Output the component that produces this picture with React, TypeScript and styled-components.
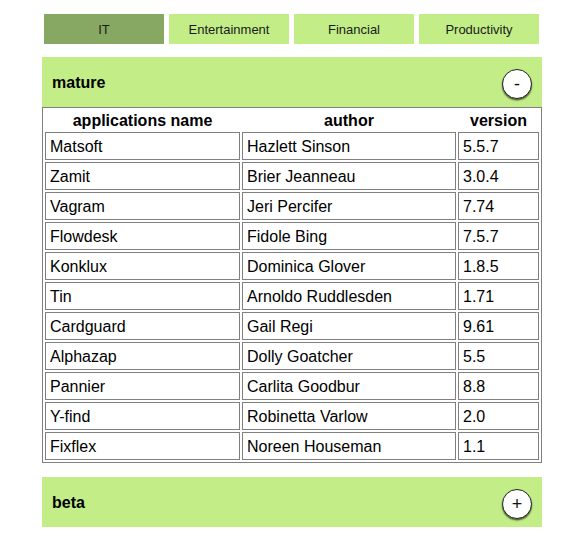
import React, { useState } from "react";
import styled, { createGlobalStyle } from "styled-components";

const Global = createGlobalStyle`
  html, body { margin: 0; padding: 0; background: #ffffff; }
  body { font-family: "Liberation Sans", Arial, Helvetica, sans-serif; color: #000; }
`;

const Page = styled.div`
  width: 500px;
  padding: 14px 0 0 42px;
  display: flex;
  flex-direction: column;
  gap: 13px;
`;

const TabBar = styled.div`
  display: flex;
  gap: 5px;
  padding-left: 2px;
`;

const Tab = styled.button<{ $active?: boolean }>`
  width: 120px;
  height: 30px;
  border: none;
  margin: 0;
  padding: 1px 0 0 0;
  background: ${(p) => (p.$active ? "#87a863" : "#c2ed87")};
  color: #1a1a1a;
  font-family: "Liberation Sans", Arial, sans-serif;
  font-size: 13px;
  cursor: pointer;
`;

const Panels = styled.div`
  display: flex;
  flex-direction: column;
  gap: 14px;
`;

const Section = styled.section`
  display: flex;
  flex-direction: column;
`;

const Header = styled.div`
  height: 50px;
  background: #c2ed87;
  display: flex;
  align-items: center;
  justify-content: space-between;
  padding: 0 10px 0 10px;
  box-sizing: border-box;
`;

const Title = styled.h3`
  margin: 0;
  padding-top: 2px;
  font-size: 16px;
  font-weight: bold;
`;

const Toggle = styled.button`
  width: 30px;
  height: 30px;
  border-radius: 50%;
  border: 1.5px solid #222;
  background: #fff;
  box-shadow: 0 1.5px 1.5px rgba(0, 0, 0, 0.6);
  display: flex;
  align-items: center;
  justify-content: center;
  padding: 0 0 1px 0;
  margin-top: 4px;
  font-family: "Liberation Sans", Arial, sans-serif;
  font-size: 18px;
  line-height: 1;
  color: #111;
  cursor: pointer;
`;

const Table = styled.table`
  width: 500px;
  table-layout: fixed;
  border: 1px solid #808080;
  border-spacing: 2px;
  border-collapse: separate;
  font-size: 16px;
`;

const Th = styled.th`
  padding: 2px 1px 0 1px;
  line-height: 18px;
  font-weight: bold;
  text-align: center;
`;

const Td = styled.td`
  border: 1px solid #808080;
  padding: 5px 4px 3px 4px;
  line-height: 18px;
  text-align: left;
  white-space: nowrap;
  overflow: hidden;
`;

const rows: [string, string, string][] = [
  ["Matsoft", "Hazlett Sinson", "5.5.7"],
  ["Zamit", "Brier Jeanneau", "3.0.4"],
  ["Vagram", "Jeri Percifer", "7.74"],
  ["Flowdesk", "Fidole Bing", "7.5.7"],
  ["Konklux", "Dominica Glover", "1.8.5"],
  ["Tin", "Arnoldo Ruddlesden", "1.71"],
  ["Cardguard", "Gail Regi", "9.61"],
  ["Alphazap", "Dolly Goatcher", "5.5"],
  ["Pannier", "Carlita Goodbur", "8.8"],
  ["Y-find", "Robinetta Varlow", "2.0"],
  ["Fixflex", "Noreen Houseman", "1.1"],
];

const tabs = ["IT", "Entertainment", "Financial", "Productivity"];

export default function App() {
  const [active, setActive] = useState("IT");
  const [open, setOpen] = useState<Record<string, boolean>>({ mature: true, beta: false });
  const toggle = (k: string) => setOpen((o) => ({ ...o, [k]: !o[k] }));

  return (
    <>
      <Global />
      <Page>
        <TabBar>
          {tabs.map((t) => (
            <Tab key={t} $active={t === active} onClick={() => setActive(t)}>
              {t}
            </Tab>
          ))}
        </TabBar>
        <Panels>
          {["mature", "beta"].map((k) => (
            <Section key={k}>
              <Header>
                <Title>{k}</Title>
                <Toggle onClick={() => toggle(k)}>{open[k] ? "-" : "+"}</Toggle>
              </Header>
              {open[k] && (
                <Table>
                  <colgroup>
                    <col style={{ width: 195 }} />
                    <col style={{ width: 214 }} />
                    <col style={{ width: 81 }} />
                  </colgroup>
                  <thead>
                    <tr>
                      <Th>applications name</Th>
                      <Th>author</Th>
                      <Th>version</Th>
                    </tr>
                  </thead>
                  <tbody>
                    {rows.map((r) => (
                      <tr key={r[0]}>
                        <Td>{r[0]}</Td>
                        <Td>{r[1]}</Td>
                        <Td>{r[2]}</Td>
                      </tr>
                    ))}
                  </tbody>
                </Table>
              )}
            </Section>
          ))}
        </Panels>
      </Page>
    </>
  );
}
